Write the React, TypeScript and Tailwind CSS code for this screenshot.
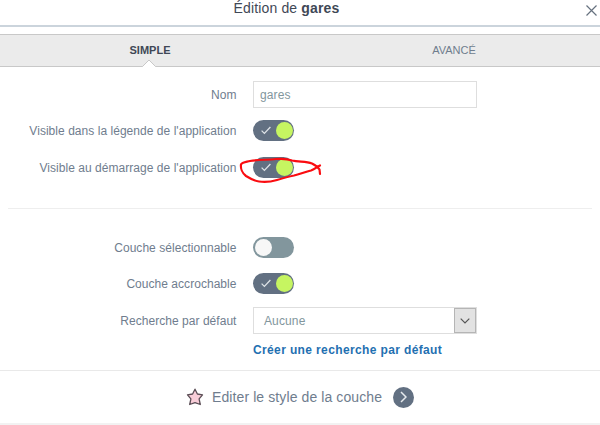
import type { ReactNode } from "react";

function Toggle({ on }: { on: boolean }) {
  return on ? (
    <div className="flex h-[21px] w-[41px] items-center justify-between rounded-full bg-[#627082] pl-[8px] pr-[1px]">
      <svg width="10" height="9" viewBox="0 0 10 9" fill="none" stroke="#dde2e6" strokeWidth="1.3">
        <path d="M0.6 4.6 3.4 7.4 9.4 1" />
      </svg>
      <span className="h-[17px] w-[17px] rounded-full bg-[#c6f561]" />
    </div>
  ) : (
    <div className="flex h-[21px] w-[41px] items-center rounded-full bg-[#82969d] pl-[2px]">
      <span className="h-[17px] w-[17px] rounded-full bg-[#f7f7f7]" />
    </div>
  );
}

function Row({ label, className, children }: { label: string; className: string; children: ReactNode }) {
  return (
    <div className={`flex items-center ${className}`}>
      <span className="w-[236.5px] shrink-0 whitespace-nowrap text-right text-[12px] leading-4 tracking-[0.04px] text-[#6f7d8e]">
        {label}
      </span>
      <div className="relative ml-[16.5px]">{children}</div>
    </div>
  );
}

export default function App() {
  return (
    <main className="h-[425px] w-[600px] overflow-hidden bg-white font-['Liberation_Sans',Arial,sans-serif]">
      <header className="flex h-[27px] items-start border-b-2 border-[#cbd4dc]">
        <h1 className="w-[573px] shrink-0 whitespace-nowrap text-center text-[14px] leading-4 tracking-[0.14px] text-[#3f4856]">
          Édition de <b>gares</b>
        </h1>
        <svg className="ml-[13px] mt-[5px]" width="11" height="11" viewBox="0 0 11 11" stroke="#66717f" strokeWidth="1.2">
          <path d="M0.5 0.5 10.5 10.5M10.5 0.5 0.5 10.5" />
        </svg>
      </header>

      <nav className="mt-[7px] flex h-[33px] border-y border-[#c8c8c8] bg-[#ebebeb] text-[11px]">
        <div className="relative flex w-[300px] items-center justify-center font-bold text-[#3f4856]">
          SIMPLE
          <svg className="absolute bottom-[-1px] left-[142px]" width="14" height="8" viewBox="0 0 14 8">
            <path d="M0 8 7 1 14 8Z" fill="#fff" />
            <path d="M0 7.5H.5L7 1 13.500 7.500H14" fill="none" stroke="#c8c8c8" />
          </svg>
        </div>
        <div className="flex w-[300px] items-center justify-center pl-[8px] text-[#6f7d8e]">AVANCÉ</div>
      </nav>

      <section className="h-[141px] pt-[14px]">
        <Row label="Nom" className="h-[27px]">
          <div className="flex h-[27px] w-[224px] items-center border border-[#dedede] pl-[6px] text-[12px] tracking-[0.12px] text-[#82969d]">
            gares
          </div>
        </Row>
        <Row label="Visible dans la légende de l'application" className="mt-[12px] h-[21px]">
          <Toggle on />
        </Row>
        <Row label="Visible au démarrage de l'application" className="mt-[16px] h-[21px]">
          <Toggle on />
          <svg className="absolute left-[-14px] top-[-2px]" width="84" height="30" viewBox="0 0 84 30" fill="none" stroke="#fa0c10" strokeWidth="2.2" strokeLinecap="round" strokeLinejoin="round">
            <path d="M81 10.500C78 12 76 14 72 15.500C66 17 61 19 55 20.500C48 22 43 23.500 38 25C33 26.500 26 27.500 20 26.500C15 26 11 23.500 7 21C3 18 1.500 13 2 9.500C3 7 7 7 11 6C20 4.500 29 5 37 4C43 3.500 48 3.500 53 5.500C60 7 67 6.500 73 8.500C76 10 79 12 80.500 14.500L81 19" />
          </svg>
        </Row>
      </section>

      <hr className="mx-[8px] border-[#eeeeee]" />

      <section className="h-[161px] pt-[28px]">
        <Row label="Couche sélectionnable" className="h-[21px]">
          <Toggle on={false} />
        </Row>
        <Row label="Couche accrochable" className="mt-[15px] h-[21px]">
          <Toggle on />
        </Row>
        <Row label="Recherche par défaut" className="mt-[13px] h-[27px]">
          <div className="flex h-[27px] w-[224px] items-stretch border border-[#dedede]">
            <span className="flex flex-1 items-center pl-[10px] text-[12px] tracking-[0.12px] text-[#82969d]">Aucune</span>
            <span className="flex w-[22px] items-center justify-center border border-[#b5b5b5] bg-[#e2e2e2]">
              <svg width="10" height="6" viewBox="0 0 10 6" fill="none" stroke="#555" strokeWidth="1.2">
                <path d="M0.7 0.7 5 5 9.300 0.700" />
              </svg>
            </span>
          </div>
        </Row>
        <a className="ml-[253px] mt-[8px] block whitespace-nowrap text-[12px] font-bold leading-4 tracking-[0.37px] text-[#1f70b1]">
          Créer une recherche par défaut
        </a>
      </section>

      <footer className="flex h-[55px] items-center border-b-2 border-t border-b-[#f2f2f2] border-t-[#e9e9e9] pl-[186px]">
        <svg width="18" height="18" viewBox="0 0 17 18" fill="#f8cdd8" stroke="#5a4d55" strokeWidth="1.3" strokeLinejoin="round">
          <path d="M8.500 1.200 10.900 6 16 6.800 12.600 10.800 13.800 16.500 8.500 14.700 3.200 16.500 4.400 10.800 1 6.800 6.100 6Z" />
        </svg>
        <span className="ml-[8px] w-[181px] whitespace-nowrap text-[14px] tracking-[0.1px] text-[#6f7d8e]">Editer le style de la couche</span>
        <span className="flex h-[21px] w-[21px] items-center justify-center rounded-full bg-[#627082]">
          <svg width="7" height="12" viewBox="0 0 7 12" fill="none" stroke="#e6eaed" strokeWidth="1.5">
            <path d="M1 1 6 6 1 11" />
          </svg>
        </span>
      </footer>
    </main>
  );
}
